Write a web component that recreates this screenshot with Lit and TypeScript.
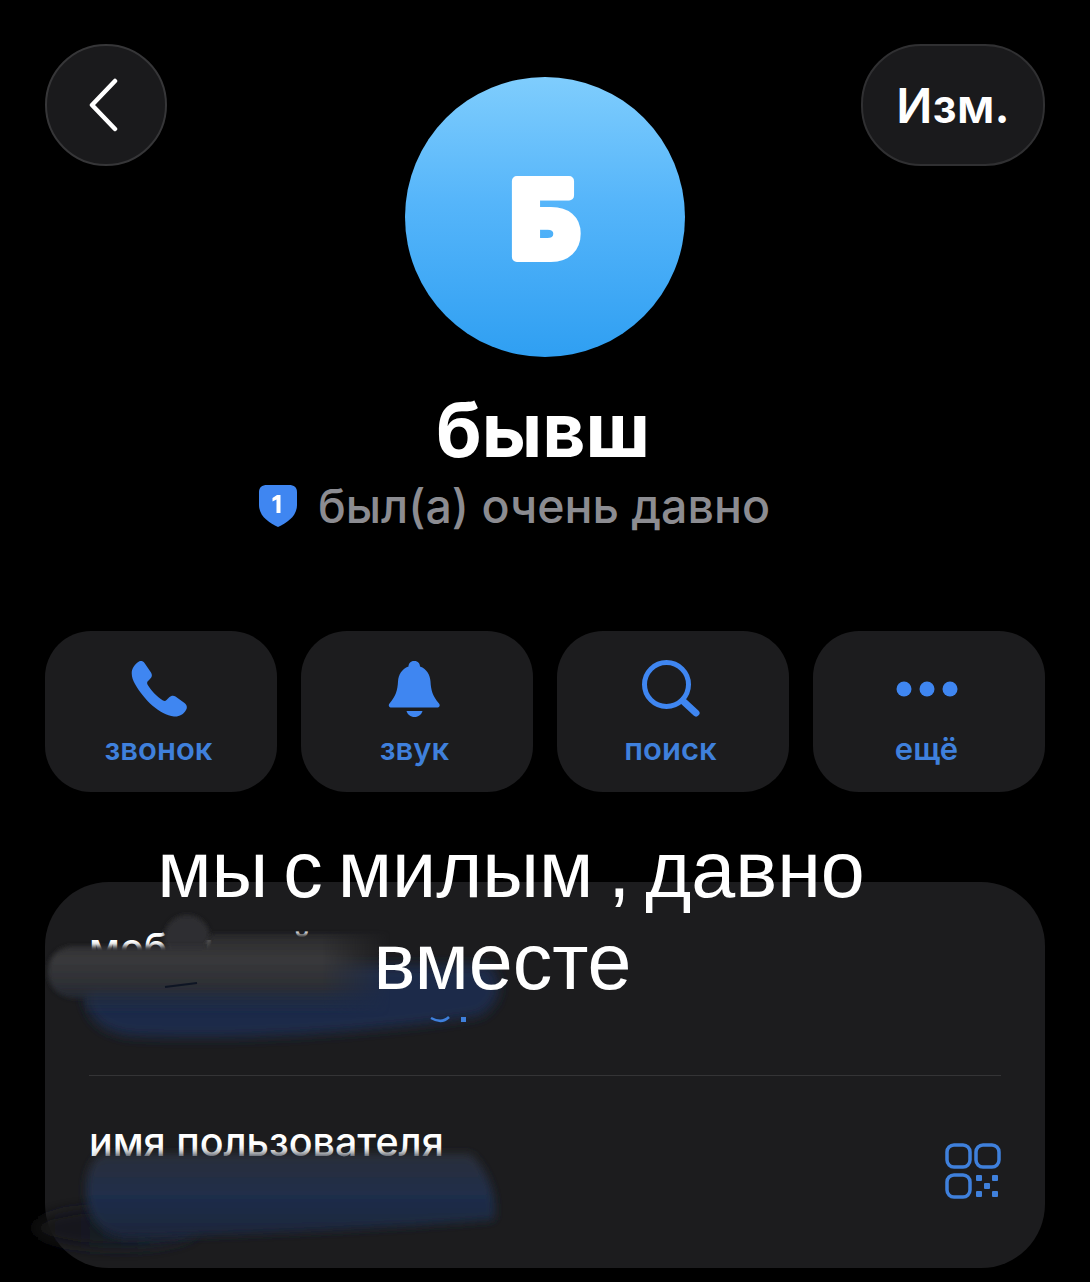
import { LitElement, html, css, svg } from 'lit';
import { customElement } from 'lit/decorators.js';

const phoneIcon = svg`<path d="M9 1.500C11 .5 13 1 14.500 3L21 12.500C22.500 15 22 17 20 19L17.500 21.500C17 22.500 17 23.500 17.500 24.500C20.500 30 27 37 33 40.500C34.500 41.200 35.500 41 36.500 40L39 37.500C41 35.500 43.500 35 45.500 36.500L54.500 43C57 45 57.500 47.500 56 50C53.500 54.500 49 57 44 56.500C30 55 14 40 5 24C1 17-1 8 9 1.500Z" fill="currentColor"/>`;
const bellIcon = svg`<path d="M26.500 0c3.500 0 5.500 2.500 5.500 5.500c7 2.500 10 8.500 10.500 15c.5 9 2 14 8.500 22c1.500 2 .5 4-2 4H3.500c-2.500 0-3.500-2-2-4c6.500-8 8-13 8.500-22c.5-6.500 3.500-12.500 10.500-15c0-3 2-5.500 5.500-5.500Z" fill="currentColor"/><path d="M18.500 50h16c-1 3.500-4 6-8 6s-7-2.500-8-6Z" fill="currentColor"/>`;
const searchIcon = svg`<circle cx="24.500" cy="24.500" r="22" fill="none" stroke="currentColor" stroke-width="5"/><path d="M41 41L54 53" stroke="currentColor" stroke-width="7" stroke-linecap="round"/>`;
const dotsIcon = svg`<circle cx="8" cy="8" r="7.500" fill="currentColor"/><circle cx="31" cy="8" r="7.500" fill="currentColor"/><circle cx="54" cy="8" r="7.500" fill="currentColor"/>`;

const actions = [
  { label: 'звонок', w: 58, h: 58, icon: phoneIcon },
  { label: 'звук', w: 53, h: 56, icon: bellIcon },
  { label: 'поиск', w: 58, h: 58, icon: searchIcon },
  { label: 'ещё', w: 62, h: 16, icon: dotsIcon },
];

@customElement('app-root')
export class AppRoot extends LitElement {
  static styles = css`
    :host {
      display: block;
      position: relative;
      width: 1090px;
      height: 1282px;
      overflow: hidden;
      background: #000;
      font-family: Inter, "Liberation Sans", sans-serif;
      color: #fff;
    }
    .top {
      display: grid;
      grid-template-columns: 1fr auto 1fr;
      align-items: start;
      padding: 44px 45px 0;
      height: 333px;
      box-sizing: border-box;
    }
    .back {
      justify-self: start;
      width: 122px;
      height: 122px;
      box-sizing: border-box;
      border-radius: 50%;
      background: #1a1a1c;
      border: 2px solid #363638;
      display: flex;
      align-items: center;
      justify-content: center;
    }
    .back svg { margin-right: 7px; }
    .edit {
      justify-self: end;
      width: 184px;
      height: 122px;
      box-sizing: border-box;
      border-radius: 60px;
      background: #1a1a1c;
      border: 2px solid #303032;
      display: flex;
      align-items: center;
      justify-content: center;
      font-size: 47.500px;
      font-weight: 600;
    }
    .avatar {
      width: 280px;
      height: 280px;
      margin-top: 33px;
      border-radius: 50%;
      background: linear-gradient(180deg, #7fcdfd 0%, #55b5fa 45%, #2f9ff2 100%);
      display: flex;
      align-items: center;
      justify-content: center;
    }
    .avatar text {
      font-size: 105px;
      font-weight: 800;
      fill: #fff;
      stroke: #fff;
      stroke-width: 10px;
      stroke-linejoin: round;
      text-anchor: middle;
    }
    .name {
      height: 82px;
      margin-top: 56px;
      padding-right: 4px;
      text-align: center;
      font-size: 75px;
      line-height: 82px;
      font-weight: 700;
    }
    .status {
      display: flex;
      justify-content: center;
      align-items: center;
      gap: 21px;
      height: 52px;
      margin-top: 9px;
      padding-right: 61px;
      font-size: 46.500px;
      font-weight: 500;
      color: #8c8c91;
    }
    .actions {
      display: grid;
      grid-template-columns: repeat(4, 232px);
      gap: 24px;
      padding: 0 45px;
      margin-top: 99px;
    }
    .action {
      height: 161px;
      box-sizing: border-box;
      padding-right: 5px;
      border-radius: 46px;
      background: #1c1c1e;
      color: #3f86f1;
      display: flex;
      flex-direction: column;
      align-items: center;
    }
    .action .slot {
      height: 87px;
      padding-top: 29px;
      box-sizing: border-box;
      display: flex;
      align-items: center;
    }
    .action span {
      margin-top: 14px;
      font-size: 31px;
      line-height: 34px;
      font-weight: 600;
      color: #3f80dc;
    }
    .card {
      margin: 90px 45px 0;
      height: 386px;
      border-radius: 64px;
      background: #1c1c1e;
      padding: 0 44px;
    }
    .row {
      height: 193px;
      box-sizing: border-box;
      display: flex;
      justify-content: space-between;
      align-items: flex-start;
    }
    .row + .row { border-top: 1px solid #343436; }
    .row label {
      margin-top: 46px;
      font-size: 39.400px;
      line-height: 40px;
      font-weight: 500;
    }
    .qr { margin-top: 67px; color: #3f80dc; }
    .smudge {
      position: absolute;
      left: 0;
      top: 0;
      pointer-events: none;
    }
    .caption {
      position: absolute;
      left: 0;
      top: 824px;
      width: 1022px;
      text-align: center;
      font-family: "Liberation Sans", Arial, sans-serif;
      font-size: 79px;
      line-height: 92px;
      word-spacing: -7px;
      white-space: nowrap;
    }
    .caption .second { display: block; padding-right: 17px; }
  `;

  render() {
    return html`
      <div class="top">
        <div class="back">
          <svg width="34" height="54" viewBox="0 0 34 54" fill="none">
            <path d="M29 3L6 27L29 51" stroke="#fff" stroke-width="4.500" stroke-linecap="round" stroke-linejoin="round"/>
          </svg>
        </div>
        <div class="avatar">
          <svg width="160" height="180" viewBox="0 0 160 180"><text x="80" y="130">Б</text></svg>
        </div>
        <div class="edit">Изм.</div>
      </div>
      <div class="name">бывш</div>
      <div class="status">
        <svg width="38" height="42" viewBox="0 0 38 42">
          <path d="M8 0H30C35 0 38 2.500 38 7V20C38 31 28 38 19 42C10 38 0 31 0 20V7C0 2.500 3 0 8 0Z" fill="#3f86f1"/>
          <path d="M21.500 10V28H17.500V14.500L13.500 16.500V13L18 10Z" fill="#fff"/>
        </svg>
        был(а) очень давно
      </div>
      <div class="actions">
        ${actions.map(
          (a) => html`
            <div class="action">
              <div class="slot">
                <svg width=${a.w} height=${a.h} viewBox="0 0 ${a.w} ${a.h}">${a.icon}</svg>
              </div>
              <span>${a.label}</span>
            </div>
          `
        )}
      </div>
      <div class="card">
        <div class="row"><label>мобильный</label></div>
        <div class="row">
          <label>имя пользователя</label>
          <svg class="qr" width="56" height="56" viewBox="0 0 56 56" fill="none" stroke="currentColor" stroke-width="3.500">
            <rect x="2" y="2" width="23" height="22" rx="7"/>
            <rect x="31" y="2" width="23" height="22" rx="7"/>
            <rect x="2" y="32" width="23" height="22" rx="7"/>
            <g fill="currentColor" stroke="none">
              <rect x="31" y="32" width="6" height="6" rx="1"/>
              <rect x="47" y="32" width="6" height="6" rx="1"/>
              <rect x="39" y="40" width="6" height="6" rx="1"/>
              <rect x="31" y="48" width="6" height="6" rx="1"/>
              <rect x="47" y="48" width="6" height="6" rx="1"/>
            </g>
          </svg>
        </div>
      </div>
      <svg class="smudge" width="1090" height="1282" viewBox="0 0 1090 1282">
        <defs>
          <filter id="b2" x="-10%" y="-10%" width="120%" height="120%"><feGaussianBlur stdDeviation="2"/></filter>
          <filter id="b4" x="-10%" y="-20%" width="120%" height="140%"><feGaussianBlur stdDeviation="4"/></filter>
          <filter id="b6" x="-20%" y="-30%" width="140%" height="160%"><feGaussianBlur stdDeviation="6"/></filter>
          <filter id="b7" x="-30%" y="-80%" width="160%" height="260%"><feGaussianBlur stdDeviation="7"/></filter>
          <linearGradient id="grey" gradientUnits="userSpaceOnUse" x1="0" y1="935" x2="0" y2="1015">
            <stop offset="0" stop-color="#2a2a2c"/>
            <stop offset=".3" stop-color="#39393b"/>
            <stop offset=".65" stop-color="#2c2e34"/>
            <stop offset="1" stop-color="#1e2c46" stop-opacity="0"/>
          </linearGradient>
          <linearGradient id="fade" gradientUnits="userSpaceOnUse" x1="322" y1="0" x2="390" y2="0">
            <stop offset="0" stop-color="#fff"/>
            <stop offset="1" stop-color="#000"/>
          </linearGradient>
          <mask id="fadeRight" maskUnits="userSpaceOnUse" x="0" y="900" width="500" height="160">
            <rect x="0" y="900" width="500" height="160" fill="url(#fade)"/>
          </mask>
          <linearGradient id="user" gradientUnits="userSpaceOnUse" x1="0" y1="1155" x2="0" y2="1240">
            <stop offset="0" stop-color="#2b303c"/>
            <stop offset=".5" stop-color="#1f2d4a"/>
            <stop offset="1" stop-color="#1c2639"/>
          </linearGradient>
          <linearGradient id="tail" gradientUnits="userSpaceOnUse" x1="30" y1="0" x2="190" y2="0">
            <stop offset="0" stop-color="#121214"/>
            <stop offset="1" stop-color="#1c2638"/>
          </linearGradient>
        </defs>
        <!-- phone smudge -->
        <path d="M100 965H490C505 985 500 1005 480 1016C400 1030 250 1042 130 1036C98 1032 86 1015 85 995Z" fill="#1e2c48" filter="url(#b6)"/>
        <g mask="url(#fadeRight)">
          <circle cx="187" cy="938" r="23" fill="#2e2e30" filter="url(#b2)"/>
          <path d="M72 946H205L212 934H400V1015H85V998C62 1002 48 988 48 972C48 958 56 948 72 946Z" fill="url(#grey)" filter="url(#b2)"/>
        </g>
        <path d="M165 987L197 983" stroke="#0e1524" stroke-width="2"/>
        <path d="M431 1018C438 1022 444 1022 449 1017" stroke="#3f80dc" stroke-width="2.500" fill="none"/>
        <rect x="461" y="1017" width="5" height="5" fill="#3f80dc"/>
        <!-- username smudge -->
        <ellipse cx="115" cy="1228" rx="82" ry="20" fill="url(#tail)" filter="url(#b7)"/>
        <path d="M105 1154H470C488 1168 498 1200 494 1220C380 1230 230 1235 130 1238C100 1238 86 1215 86 1190C86 1172 92 1156 105 1154Z" fill="url(#user)" filter="url(#b4)"/>
      </svg>
      <div class="caption">мы с милым , давно<span class="second">вместе</span></div>
    `;
  }
}
